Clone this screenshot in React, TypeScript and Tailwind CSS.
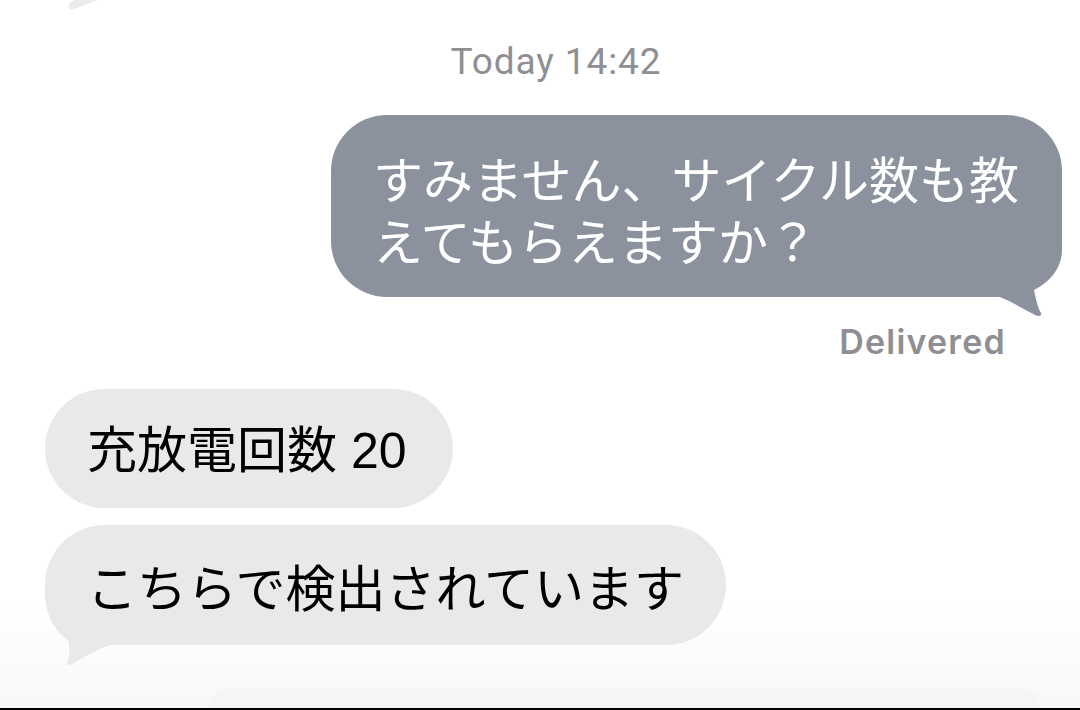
import React from "react";

const JP = { fontFamily: '"Noto Sans CJK JP", "Noto Sans", sans-serif' };

export default function App() {
  return (
    <div className="relative w-[1080px] h-[710px] overflow-hidden bg-gradient-to-b from-white from-85% to-[#f8f8f8] flex flex-col">
      {/* fragment of previous bubble tail */}
      <div className="h-[8px] flex-none">
        <svg width="120" height="12" viewBox="0 0 120 12" className="block">
          <path d="M74,0 L98,0 C90,3 82,6 74,9 C69,11 67,7 70,3 Z" fill="#ebebeb" />
        </svg>
      </div>

      {/* timestamp */}
      <div
        className="mt-[34px] h-[40px] leading-[40px] text-[37px] tracking-[0.9px] text-[#8e8e93] text-center pl-[32px]"
        style={{ fontFamily: 'Roboto, "Liberation Sans", sans-serif' }}
      >
        Today 14:42
      </div>

      {/* sent bubble */}
      <div className="mt-[33px] flex justify-end pr-[18px]">
        <div className="relative w-[731px] rounded-[56px] bg-[#8b929d] pl-[42px] pr-[38px] pt-[31px] pb-[27px]">
          <p className="relative z-10 text-white text-[50px] leading-[62px]" style={JP}>
            すみません、サイクル数も教えてもらえますか？
          </p>
          <svg
            width="72"
            height="84"
            viewBox="0 0 72 84"
            className="absolute right-0 bottom-[-23px]"
          >
            <path
              d="M72,0 L72,14 C72,32 60,46 44,54 C46,64 48,72 51,77 C52,80 49,81 45,79 C34,73 22,66 10,61 L0,61 L0,0 Z"
              fill="#8b929d"
            />
          </svg>
        </div>
      </div>

      {/* delivered */}
      <div className="mt-[25px] flex justify-end pr-[74px]">
        <span
          className="text-[34px] leading-[40px] font-semibold tracking-[1.2px] text-[#8e8e93]"
          style={{ fontFamily: 'Inter, "Liberation Sans", sans-serif' }}
        >
          Delivered
        </span>
      </div>

      {/* received 1 */}
      <div className="mt-[27px] pl-[45px] flex">
        <div className="h-[119px] rounded-full bg-[#e9e9eb] pl-[42px] pr-[46px] flex items-center">
          <span className="text-black text-[50px] leading-[62px]" style={JP}>
            充放電回数
            <span style={{ fontFamily: '"Liberation Sans", Arial, sans-serif' }}> 20</span>
          </span>
        </div>
      </div>

      {/* received 2 */}
      <div className="mt-[17px] pl-[45px] flex">
        <div className="relative h-[120px] rounded-full bg-[#e9e9eb] pl-[42px] pr-[42px] flex items-center">
          <span className="relative z-10 text-black text-[50px] leading-[62px]" style={JP}>
            こちらで検出されています
          </span>
          <svg
            width="100"
            height="90"
            viewBox="0 0 100 90"
            className="absolute left-[-5px] bottom-[-25px]"
          >
            <path
              d="M5,5 L5,18 C7,38 16,52 28,60 C30,68 30,76 27,82 C26,85 29,86 32,84 C44,77 56,70 70,65 L100,65 L100,5 Z"
              fill="#e9e9eb"
            />
          </svg>
        </div>
      </div>

      {/* faint next bubble */}
      <div className="mt-[43px] h-[20px] flex pl-[210px] pr-[40px] flex-none">
        <div className="flex-1 rounded-t-[40px] bg-[#f5f5f6]" />
      </div>

      {/* bottom edge */}
      <div className="h-[2px] bg-black flex-none" />
    </div>
  );
}
